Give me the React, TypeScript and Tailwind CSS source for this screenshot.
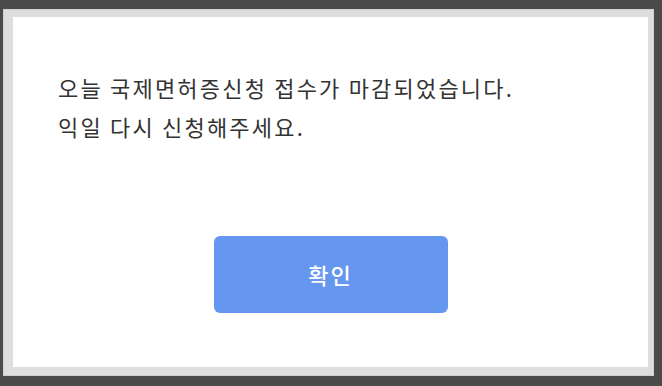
import React from "react";

const font = {
  fontFamily: '"Noto Sans CJK KR", "Noto Sans", sans-serif',
};

const NoticeModal = () => {
  return (
    <div className="w-[651px] h-[367px] bg-[#dedede] border border-[#d0d0d0] pl-[9px] pr-[5px] pt-[7px] pb-[8px]">
      <div className="w-full h-full bg-white flex flex-col">
        <div className="pl-[45px] pt-[51px] text-[22px] leading-[39px] text-[#333333] tracking-[2.2px]">
          <p>오늘 국제면허증신청 접수가 마감되었습니다.</p>
          <p>익일 다시 신청해주세요.</p>
        </div>
        <div className="flex justify-center mt-[90px]">
          <button className="w-[234px] h-[77px] rounded-[6px] bg-[#6597f1] text-white text-[22px] font-medium tracking-[2px]">
            확인
          </button>
        </div>
      </div>
    </div>
  );
};

export default function App() {
  return (
    <div className="w-[662px] h-[386px] bg-[#4b4b4b] overflow-hidden pt-[9px] pl-[3px]" style={font}>
      <NoticeModal />
    </div>
  );
}
